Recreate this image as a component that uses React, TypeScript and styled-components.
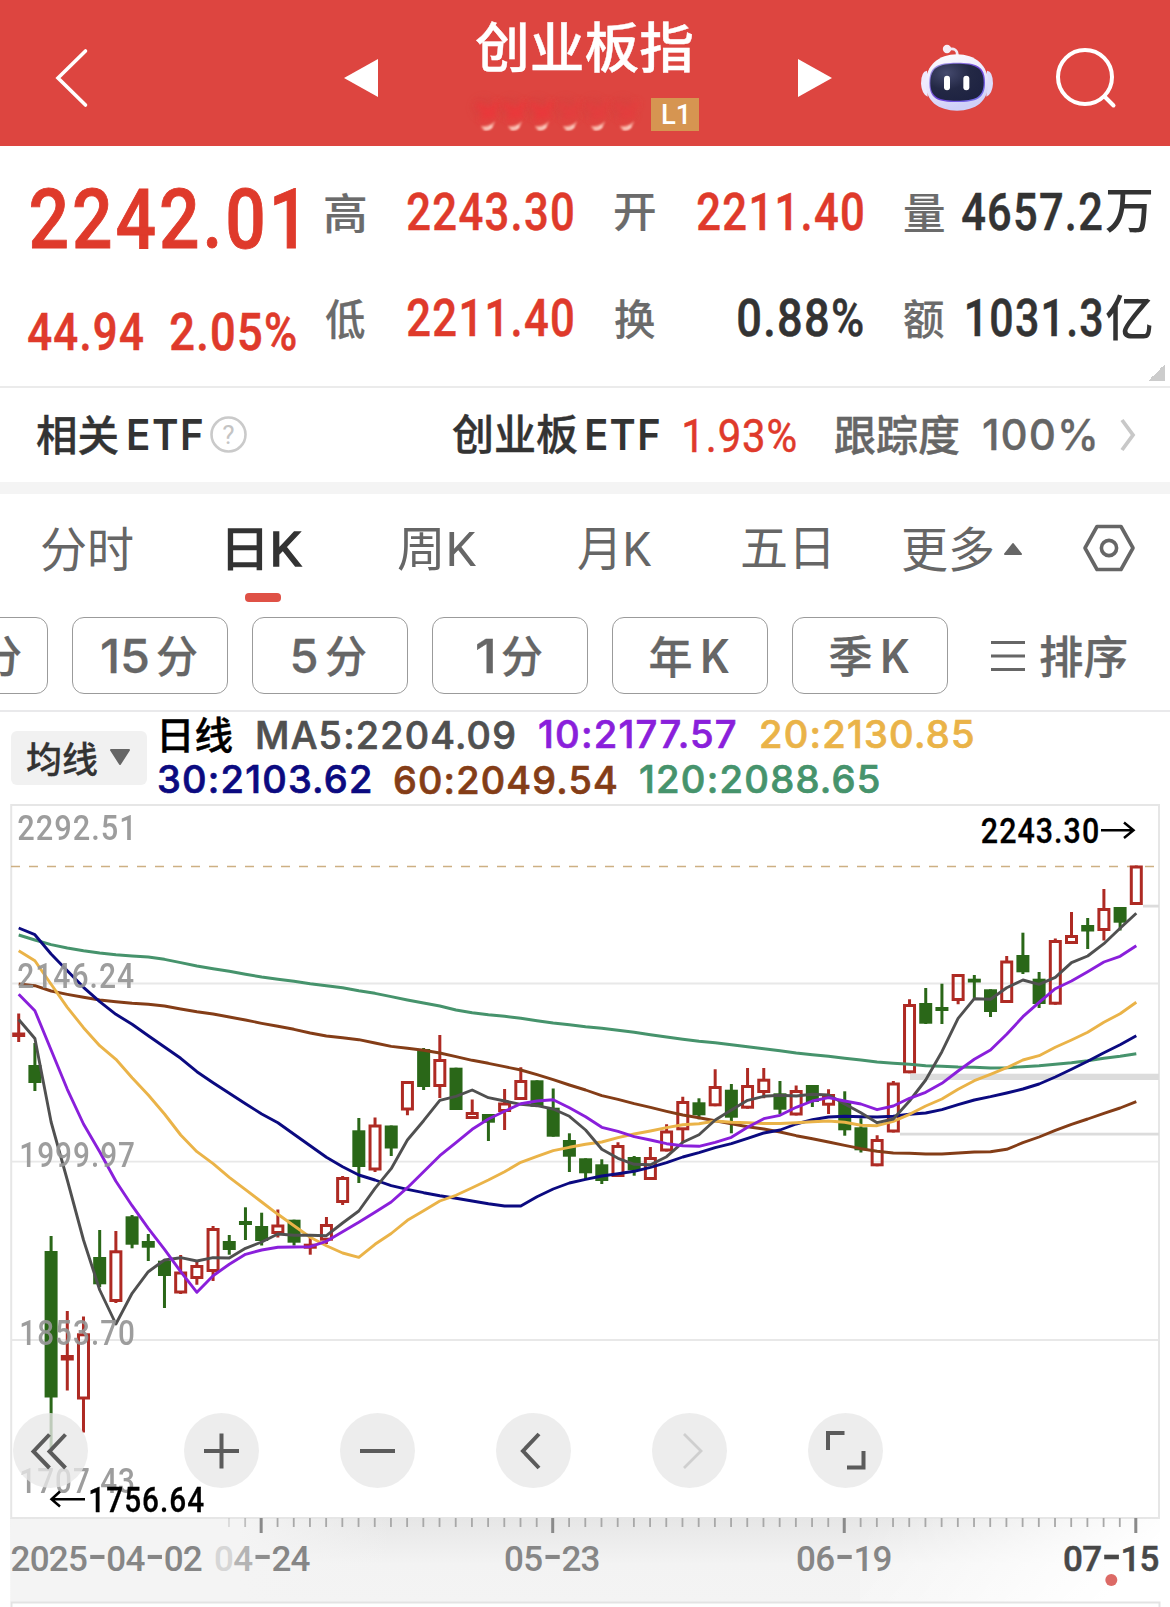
import React from "react";
import styled, { createGlobalStyle } from "styled-components";

const DIGITS = 'Roboto, "Noto Sans CJK SC", sans-serif';
const LATIN = 'Inter, "Noto Sans CJK SC", sans-serif';

const GlobalStyle = createGlobalStyle`
  *, *::before, *::after { box-sizing: border-box; }
  body { margin: 0; background: #fff; font-family: ${DIGITS}; }
  svg { display: block; flex: none; overflow: visible; }
`;

/* ---------- text stretched to an exact ink width ---------- */

const canvas = document.createElement("canvas").getContext("2d")!;

function measure(text: string, size: number, weight: number, face: string, spacing = 0) {
  canvas.font = `${weight} ${size}px ${face}`;
  canvas.letterSpacing = `${spacing}px`;
  const m = canvas.measureText(text);
  const left = -m.actualBoundingBoxLeft;
  const width = m.actualBoundingBoxRight + m.actualBoundingBoxLeft;
  const inkMid = (m.actualBoundingBoxAscent - m.actualBoundingBoxDescent) / 2;
  const boxMid = (m.fontBoundingBoxAscent - m.fontBoundingBoxDescent) / 2;
  return { left, width, drop: inkMid - boxMid };
}

const TextBox = styled.span<{ $w: number; $ml: number; $size: number; $weight: number; $face: string; $color: string; $edge: number; $spacing: number }>`
  display: block;
  flex: none;
  width: ${(p) => p.$w}px;
  margin-left: ${(p) => p.$ml}px;
  font: ${(p) => p.$weight} ${(p) => p.$size}px/${(p) => Math.round(p.$size * 1.2)}px ${(p) => p.$face};
  letter-spacing: ${(p) => p.$spacing}px;
  color: ${(p) => p.$color};
  -webkit-text-stroke: ${(p) => p.$edge}px ${(p) => p.$color};
  white-space: nowrap;
`;

const TextInk = styled.span`
  display: inline-block;
  vertical-align: top;
  transform-origin: 0 50%;
`;

type TextProps = {
  text: string;
  w: number;
  size: number;
  ml?: number;
  dy?: number;
  weight?: number;
  face?: string;
  color?: string;
  edge?: number;
  spacing?: number;
};

function Txt({ text, w, size, ml = 0, dy = 0, weight = 500, face = DIGITS, color = "#666", edge = 0, spacing = 0 }: TextProps) {
  const m = measure(text, size, weight, face, spacing);
  const s = w / m.width;
  return (
    <TextBox $w={w} $ml={ml} $size={size} $weight={weight} $face={face} $color={color} $edge={edge} $spacing={spacing}>
      <TextInk style={{ transform: `translate(${-m.left * s}px, ${m.drop + dy}px) scaleX(${s})` }}>{text}</TextInk>
    </TextBox>
  );
}

/* ---------- header ---------- */

const Header = styled.header`
  display: flex;
  align-items: center;
  height: 146px;
  padding: 10px 0 0 54px;
  background: #dd4540;
`;

const Slot = styled.div<{ $ml: number }>`
  margin-left: ${(p) => p.$ml}px;
  flex: none;
`;

const TitleBlock = styled.div`
  width: 229px;
  height: 136px;
  margin-left: 92px;
  padding-top: 4px;
  flex: none;
`;

const CodeRow = styled.div`
  display: flex;
  justify-content: space-between;
  align-items: flex-start;
  margin-top: 17px;
`;

const LevelBadge = styled.div`
  display: flex;
  align-items: center;
  width: 48px;
  height: 33px;
  margin-top: 2px;
  background: #d69551;
`;

const RED_SPOTS = [17, 44, 71, 99, 127, 156];

function CodeSmudge() {
  return (
    <svg width="176" height="38" viewBox="0 0 176 38">
      <defs>
        <filter id="soft" x="-50%" y="-50%" width="200%" height="200%">
          <feGaussianBlur stdDeviation="3.2" />
        </filter>
        <filter id="softer" x="-50%" y="-50%" width="200%" height="200%">
          <feGaussianBlur stdDeviation="0.8" />
        </filter>
      </defs>
      {RED_SPOTS.map((x, i) => (
        <g key={x}>
          <ellipse cx={x - 3} cy={12} rx={12} ry={11} fill="#d33f3c" opacity=".4" filter="url(#soft)" />
          <path
            d={`M${x - 10} 8L${x + 2} 17L${x + 12} 6M${x - 6} 25L${x + 1} 17L${x + 9} 22`}
            fill="none"
            stroke={i < 3 ? "#f53238" : "#ea3a3c"}
            strokeWidth="6"
            opacity=".65"
            filter="url(#soft)"
          />
          <path d={`M${x - 6} 30Q${x + 3} 31 ${x + 8} 25Q${x + 6} 34 ${x - 1} 34Q${x - 5} 34 ${x - 6} 30Z`} fill="#f6a497" filter="url(#softer)" />
          <path d={`M${x - 3} 33Q${x + 2} 34 ${x + 5} 30`} fill="none" stroke="#ffe6dc" strokeWidth="1.6" filter="url(#softer)" />
        </g>
      ))}
    </svg>
  );
}

function Robot() {
  return (
    <svg width="100" height="85" viewBox="0 0 300 255">
      <defs>
        <linearGradient id="shell" x1="0" y1="0" x2="0.3" y2="1">
          <stop offset="0" stopColor="#ffffff" />
          <stop offset=".6" stopColor="#e8e4fb" />
          <stop offset="1" stopColor="#cfd0f8" />
        </linearGradient>
        <linearGradient id="rim" x1="0" y1="0" x2="1" y2="1">
          <stop offset="0" stopColor="#a9a4e6" />
          <stop offset=".55" stopColor="#6a3fd8" />
          <stop offset="1" stopColor="#7b7df0" />
        </linearGradient>
        <radialGradient id="visor" cx=".3" cy=".25" r=".9">
          <stop offset="0" stopColor="#454a6e" />
          <stop offset=".5" stopColor="#232845" />
          <stop offset="1" stopColor="#1c2140" />
        </radialGradient>
      </defs>
      <path d="M128 41Q158 32 157 60" fill="none" stroke="#f2e9f5" strokeWidth="8" />
      <circle cx="126" cy="39" r="12.5" fill="#f6edf6" />
      <path d="M66 104Q48 106 48 143Q50 174 68 182Z" fill="#efeafc" />
      <path d="M246 104Q264 106 264 143Q262 174 244 182Z" fill="#dfdcfb" />
      <path d="M156 55C210 55 250 88 250 142C250 196 212 224 156 224C100 224 62 196 62 142C62 88 102 55 156 55Z" fill="url(#shell)" />
      <path d="M156 80C214 80 240 90 240 140C240 188 214 198 156 198C98 198 73 188 73 140C73 90 98 80 156 80Z" fill="url(#rim)" />
      <path d="M155 83C209 83 236 93 236 140C236 185 209 194 155 194C103 194 76 185 76 140C76 93 103 83 155 83Z" fill="url(#visor)" />
      <rect x="117" y="119" width="18" height="44" rx="9" fill="#fff" />
      <rect x="175" y="119" width="18" height="44" rx="9" fill="#fff" />
    </svg>
  );
}

function TopBar() {
  return (
    <Header>
      <svg width="36" height="62" viewBox="0 0 36 62" fill="none" stroke="#fff" strokeWidth="3.6">
        <path d="M31.5 4L4 31L31.5 58" strokeLinecap="round" />
      </svg>
      <Slot $ml={254}>
        <svg width="34" height="38" viewBox="0 0 34 38">
          <path d="M34 0V38L0 19Z" fill="#fff" />
        </svg>
      </Slot>
      <TitleBlock>
        <Txt text="创业板指" w={216} size={54} ml={6} color="#fff" weight={500} edge={0.4} />
        <CodeRow>
          <CodeSmudge />
          <LevelBadge>
            <Txt text="L1" w={25} size={27} ml={11} dy={-1} color="#fff" />
          </LevelBadge>
        </CodeRow>
      </TitleBlock>
      <Slot $ml={99}>
        <svg width="34" height="38" viewBox="0 0 34 38">
          <path d="M0 0V38L34 19Z" fill="#fff" />
        </svg>
      </Slot>
      <Slot $ml={73}>
        <Robot />
      </Slot>
      <Slot $ml={50}>
        <svg width="64" height="62" viewBox="0 0 64 62" fill="none" stroke="#fff" strokeWidth="4">
          <circle cx="30" cy="30" r="27" />
          <path d="M50 50L58.5 58.5" strokeLinecap="round" />
        </svg>
      </Slot>
    </Header>
  );
}

/* ---------- quote ---------- */

const RED = "#df3a2b";
const DARK = "#333";

const Quote = styled.section`
  display: flex;
  height: 242px;
  border-bottom: 2px solid #ebebeb;
`;

const Price = styled.div`
  width: 325px;
  flex: none;
`;

const PriceRow = styled.div<{ $h: number }>`
  display: flex;
  align-items: center;
  height: ${(p) => p.$h}px;
`;

const Stats = styled.div`
  display: grid;
  grid-template-columns: repeat(3, 248px);
  grid-template-rows: 106px 106px;
  column-gap: 41.5px;
  padding-top: 12px;
`;

const Stat = styled.div`
  display: flex;
  align-items: center;
  justify-content: space-between;
`;

const Value = styled.div`
  display: flex;
  align-items: center;
`;

const Corner = styled.i`
  align-self: flex-end;
  width: 17px;
  height: 17px;
  margin: 0 0 5px -4px;
  background: linear-gradient(135deg, transparent 50%, #ccc 50%);
`;

type StatItem = { label: string; value: string; w: number; unit?: string; color: string };

const STATS: StatItem[] = [
  { label: "高", value: "2243.30", w: 165, color: RED },
  { label: "开", value: "2211.40", w: 165, color: RED },
  { label: "量", value: "4657.2", w: 140, unit: "万", color: DARK },
  { label: "低", value: "2211.40", w: 165, color: RED },
  { label: "换", value: "0.88%", w: 125, color: DARK },
  { label: "额", value: "1031.3", w: 135, unit: "亿", color: DARK },
];

function QuotePanel() {
  return (
    <Quote>
      <Price>
        <PriceRow $h={143.5}>
          <Txt text="2242.01" w={265} size={84} ml={31} dy={0.7} color={RED} spacing={3.5} edge={0.9} />
        </PriceRow>
        <PriceRow $h={84.5}>
          <Txt text="44.94" w={115} size={51} ml={28} color={RED} spacing={1.5} edge={0.6} />
          <Txt text="2.05%" w={125} size={51} ml={28} color={RED} spacing={1.5} edge={0.6} />
        </PriceRow>
      </Price>
      <Stats>
        {STATS.map((s) => (
          <Stat key={s.label}>
            <Txt text={s.label} w={40} size={42.5} dy={1.5} color="#6b6b6b" edge={0.2} />
            <Value>
              <Txt text={s.value} w={s.w} size={51} color={s.color} spacing={1.5} edge={0.5} />
              {s.unit && <Txt text={s.unit} w={46} size={49} ml={4} color={s.color} />}
            </Value>
          </Stat>
        ))}
      </Stats>
      <Corner />
    </Quote>
  );
}

/* ---------- related ETF ---------- */

const EtfBar = styled.section`
  display: flex;
  align-items: center;
  height: 106px;
  padding-bottom: 1px;
  border-bottom: 12px solid #f4f4f4;
`;

function EtfRow() {
  return (
    <EtfBar>
      <Txt text="相关" w={81} size={42} ml={37} color={DARK} edge={0.4} />
      <Txt text="ETF" w={73} size={42} ml={11} face={LATIN} weight={600} color={DARK} spacing={1.5} />
      <Slot $ml={8}>
        <svg width="37" height="37" viewBox="0 0 37 37">
          <circle cx="18.5" cy="18.5" r="17" fill="none" stroke="#cacaca" strokeWidth="2.6" />
          <text x="18.5" y="27.5" textAnchor="middle" fontFamily="Roboto, sans-serif" fontSize="26" fill="#c4c4c4">?</text>
        </svg>
      </Slot>
      <Txt text="创业板" w={125} size={42} ml={205} color={DARK} edge={0.4} />
      <Txt text="ETF" w={72} size={42} ml={10} face={LATIN} weight={600} color={DARK} spacing={1.5} />
      <Txt text="1.93%" w={112} size={45.5} ml={25} dy={0.5} weight={400} color={RED} spacing={1} edge={0.5} />
      <Txt text="跟踪度" w={124} size={42} ml={39} edge={0.4} />
      <Txt text="100%" w={112} size={42} ml={24} dy={0.5} face={LATIN} spacing={1} edge={0.3} />
      <Slot $ml={25}>
        <svg width="15" height="32" viewBox="0 0 15 32" fill="none" stroke="#c8c8c8" strokeWidth="3.8">
          <path d="M2 1L13 16L2 31" />
        </svg>
      </Slot>
    </EtfBar>
  );
}

/* ---------- period tabs ---------- */

const Tabs = styled.nav`
  display: flex;
  height: 123px;
  padding-top: 26px;
`;

const Tab = styled.div<{ $ml: number }>`
  display: flex;
  flex-direction: column;
  align-items: flex-start;
  margin-left: ${(p) => p.$ml}px;
  flex: none;
`;

const ActiveMark = styled.i`
  width: 36px;
  height: 9px;
  margin: 15px 0 0 17px;
  border-radius: 4px;
  background: #df5146;
`;

const MoreTab = styled.div`
  display: flex;
  height: 58px;
  align-items: center;
  margin-left: 75px;
`;

function PeriodTabs() {
  return (
    <Tabs>
      <Tab $ml={42}>
        <Txt text="分时" w={91} size={48} weight={400} />
      </Tab>
      <Tab $ml={95}>
        <Txt text="日K" w={74} size={48} weight={400} color={DARK} edge={1.4} dy={1} />
        <ActiveMark />
      </Tab>
      <Tab $ml={96}>
        <Txt text="周K" w={79} size={48} weight={400} dy={1} />
      </Tab>
      <Tab $ml={101}>
        <Txt text="月K" w={74} size={48} weight={400} dy={1} />
      </Tab>
      <Tab $ml={90}>
        <Txt text="五日" w={86} size={48} weight={400} />
      </Tab>
      <MoreTab>
        <Txt text="更多" w={90} size={48} weight={400} />
        <Slot $ml={11}>
          <svg width="18" height="12" viewBox="0 0 18 12">
            <path d="M9 1L17 11H1Z" fill="#666" stroke="#666" strokeWidth="2" strokeLinejoin="round" />
          </svg>
        </Slot>
        <Slot $ml={61}>
          <svg width="52" height="46" viewBox="0 1 52 46" fill="none" stroke="#666" strokeWidth="3.6" strokeLinejoin="round">
            <path d="M14 1.5H38L50 23L38 44.5H14L2 23Z" />
            <circle cx="26" cy="23" r="7.6" />
          </svg>
        </Slot>
      </MoreTab>
    </Tabs>
  );
}

const Pills = styled.div`
  display: flex;
  align-items: center;
  gap: 24px;
  height: 95px;
  padding-bottom: 16px;
  border-bottom: 2px solid #e9e9eb;
`;

const Pill = styled.div<{ $cut?: boolean; $gap?: number }>`
  display: flex;
  align-items: center;
  justify-content: ${(p) => (p.$cut ? "flex-end" : "center")};
  gap: ${(p) => p.$gap ?? 0}px;
  flex: none;
  width: 156px;
  height: 77px;
  margin-left: ${(p) => (p.$cut ? -108 : 0)}px;
  padding-right: ${(p) => (p.$cut ? 26 : 2)}px;
  border: 1.5px solid #9b9b9b;
  border-radius: 12px;
`;

const Sort = styled.div`
  display: flex;
  align-items: center;
  margin-left: 19px;
`;

const PILLS = [
  { cjk: "分", latin: "15", w: 46, first: true },
  { cjk: "分", latin: "5", w: 24, first: true },
  { cjk: "分", latin: "1", w: 16, first: true },
  { cjk: "年", latin: "K", w: 26 },
  { cjk: "季", latin: "K", w: 26 },
];

function PillRow() {
  return (
    <Pills>
      <Pill $cut>
        <Txt text="分" w={41} size={44} dy={1} edge={0.3} />
      </Pill>
      {PILLS.map((p) => {
        const latin = <Txt key="l" text={p.latin} w={p.w} size={47} face={LATIN} weight={p.first ? 500 : 600} edge={p.first ? 0.3 : 0} />;
        const cjk = <Txt key="c" text={p.cjk} w={p.first ? 40 : 42} size={44} dy={1} edge={0.3} />;
        return (
          <Pill key={p.cjk + p.latin} $gap={p.first ? 9 : 11}>
            {p.first ? [latin, cjk] : [cjk, latin]}
          </Pill>
        );
      })}
      <Sort>
        <svg width="34" height="30" viewBox="0 0 34 30" stroke="#666" strokeWidth="2.8">
          <path d="M0 1.5H34M0 15H34M0 28.5H34" />
        </svg>
        <Txt text="排序" w={86} size={45} ml={15} dy={0.5} edge={0.3} />
      </Sort>
    </Pills>
  );
}

/* ---------- moving-average legend ---------- */

const Legend = styled.section`
  display: flex;
  height: 91px;
`;

const AverageButton = styled.div`
  display: flex;
  align-items: center;
  width: 136px;
  height: 54px;
  margin: 19px 0 0 11px;
  border-radius: 6px;
  background: #f1f1f1;
`;

const LegendRows = styled.div`
  padding: 0 0 0 12px;
`;

const LegendRow = styled.div<{ $h: number }>`
  display: flex;
  align-items: center;
  height: ${(p) => p.$h}px;
`;

const C = {
  ma5: "#505050",
  ma10: "#8a1fdb",
  ma20: "#eab348",
  ma30: "#0b0a80",
  ma60: "#843d17",
  ma120: "#46936c",
};

function Average({ text, w, ml = 0, color }: { text: string; w: number; ml?: number; color: string }) {
  return <Txt text={text} w={w} size={38} ml={ml} face={LATIN} color={color} spacing={1.2} edge={0.7} />;
}

function LegendBar() {
  return (
    <Legend>
      <AverageButton>
        <Txt text="均线" w={70} size={36} ml={16} dy={1} weight={500} color="#333" edge={0.3} />
        <Slot $ml={13}>
          <svg width="20" height="16" viewBox="0 1 20 16">
            <path d="M1 1H19L10 15Z" fill="#666" stroke="#666" strokeWidth="2" strokeLinejoin="round" />
          </svg>
        </Slot>
      </AverageButton>
      <LegendRows>
        <LegendRow $h={43}>
          <Txt text="日线" w={70} size={38} ml={3} color="#000" edge={0.4} />
          <Average text="MA5:2204.09" w={256} ml={26} color={C.ma5} />
          <Average text="10:2177.57" w={197} ml={25} color={C.ma10} />
          <Average text="20:2130.85" w={212} ml={25} color={C.ma20} />
        </LegendRow>
        <LegendRow $h={47}>
          <Average text="30:2103.62" w={211} color={C.ma30} />
          <Average text="60:2049.54" w={221} ml={25} color={C.ma60} />
          <Average text="120:2088.65" w={239} ml={24} color={C.ma120} />
        </LegendRow>
      </LegendRows>
    </Legend>
  );
}

/* ---------- candlestick chart ---------- */

const ChartArea = styled.section`
  position: relative;
  height: 804px;
  overflow: hidden;
`;

const STEP = 16.197;
const cx = (i: number) => 18.7 + i * STEP;

/* colour, high, body top, body bottom, low */
type Candle = ["r" | "g", number, number, number, number];

const CANDLES: Candle[] = [
  ["r", 1013.5, 1032.5, 1037, 1042], ["g", 1043, 1065, 1083, 1091], ["g", 1236, 1251, 1397.5, 1448],
  ["r", 1311, 1355, 1360.5, 1390.5], ["r", 1316.5, 1333.3, 1399.5, 1432.5], ["g", 1230, 1257, 1284.3, 1287],
  ["r", 1231, 1250.3, 1302, 1303], ["g", 1215, 1216.3, 1244.7, 1248.3], ["g", 1234, 1241, 1247.7, 1261],
  ["g", 1260, 1260.7, 1276, 1308], ["r", 1255, 1271.5, 1293.5, 1294], ["r", 1261.7, 1265, 1279, 1284.7],
  ["r", 1226, 1228, 1272, 1281], ["g", 1235, 1241, 1250, 1254.7], ["g", 1207.3, 1221, 1225, 1240],
  ["g", 1212.7, 1226, 1241, 1245.5], ["r", 1209.5, 1224.5, 1234, 1237.5], ["g", 1219.7, 1219.7, 1242.7, 1245.5],
  ["r", 1237.5, 1243.7, 1248.7, 1254.7], ["r", 1217, 1224, 1240.7, 1244], ["r", 1176, 1177, 1203, 1205],
  ["g", 1118, 1130.3, 1167, 1183], ["r", 1117.5, 1124.5, 1170.5, 1172], ["g", 1125.5, 1125.5, 1148.5, 1156],
  ["r", 1081, 1081, 1110.5, 1115.3], ["g", 1048, 1049, 1087, 1090], ["r", 1035, 1059, 1087, 1098],
  ["g", 1067.7, 1067.7, 1110, 1110], ["r", 1099.5, 1112, 1119, 1119], ["g", 1114, 1114, 1122.7, 1141],
  ["r", 1089, 1102.5, 1112, 1130], ["r", 1067.3, 1080, 1100, 1100], ["g", 1080.3, 1080.3, 1106.7, 1107],
  ["g", 1088.5, 1107.7, 1136.7, 1136.7], ["g", 1133.3, 1140, 1156.7, 1172], ["g", 1158.3, 1158.3, 1173.3, 1180],
  ["g", 1159.3, 1164.3, 1181, 1184], ["r", 1142.3, 1145, 1177, 1177], ["g", 1156, 1157, 1170.3, 1175.7],
  ["r", 1147, 1157, 1180, 1180], ["r", 1124.3, 1130.5, 1151.5, 1151.5], ["r", 1096.7, 1101, 1130.3, 1142.7],
  ["g", 1098.3, 1102.3, 1115.3, 1119.3], ["r", 1069.3, 1086, 1106.3, 1106.3], ["g", 1084, 1089.7, 1117.7, 1133.3],
  ["r", 1068, 1085, 1108.7, 1108.7], ["r", 1068, 1078.7, 1093, 1098.3], ["g", 1081, 1093.3, 1109.7, 1114],
  ["r", 1085.5, 1090, 1115.5, 1115.5], ["g", 1085, 1085, 1102, 1107], ["r", 1089.3, 1094, 1105.7, 1114],
  ["g", 1091.3, 1101.7, 1130.3, 1135.7], ["g", 1118.3, 1127.3, 1150.3, 1152.5], ["r", 1135.3, 1139, 1166.3, 1166.3],
  ["r", 1081, 1082.5, 1132.5, 1132.5], ["r", 999.3, 1004, 1073.3, 1073.3], ["g", 988, 1003, 1023.7, 1024],
  ["g", 983.7, 1007, 1011, 1024], ["r", 974, 974, 1001, 1004.3], ["g", 975, 978.7, 982.5, 998.7],
  ["g", 989.3, 989.3, 1012, 1017], ["r", 956, 960.5, 1003, 1003], ["g", 932.7, 955, 972.3, 974],
  ["g", 972, 978.7, 1004, 1008], ["r", 938.5, 940, 1004.7, 1004.7], ["r", 912, 935, 944, 944],
  ["g", 918, 925, 931.5, 949], ["r", 889, 908, 931, 940.5], ["g", 907, 907, 922.7, 930.5],
  ["r", 865.5, 865.5, 905, 905],
];

const MA: Record<keyof typeof C, number[]> = {
  ma120: [935, 940, 944.7, 948, 950.7, 953, 954.7, 956, 957, 959.3, 962.7, 966, 968.7, 971.3, 974.3, 977, 979.3, 981.3, 983.7, 985.7, 987.7, 990.7, 993.3, 996.7, 1000, 1003, 1006, 1010, 1012.7, 1014.7, 1016.3, 1018.3, 1020.7, 1023, 1024.7, 1026.7, 1028.3, 1030.3, 1032.3, 1034.7, 1037, 1039.3, 1041.3, 1042.7, 1044.7, 1046.7, 1048.7, 1050.7, 1053, 1054.7, 1056.3, 1058.3, 1060, 1062, 1063.3, 1064.3, 1065.7, 1066.3, 1067, 1067.3, 1068, 1067.7, 1066.7, 1065.7, 1064.3, 1062.7, 1060.7, 1058.3, 1056.3, 1053.7],
  ma60: [984, 985.7, 991, 994.3, 997.3, 1000, 1001.7, 1003.3, 1004.3, 1006, 1009, 1011.7, 1014, 1017, 1020, 1023.3, 1026.3, 1029.3, 1033, 1036, 1037.7, 1039.7, 1043, 1046.4, 1048.3, 1050.3, 1053, 1056.7, 1060.3, 1063.3, 1066.7, 1070, 1074.7, 1079.7, 1085, 1090, 1095.7, 1099.3, 1103.7, 1107.3, 1111.3, 1115, 1117.7, 1120.7, 1123.7, 1126.7, 1129, 1132, 1135.7, 1138.7, 1142, 1145.3, 1148.7, 1151.3, 1153, 1153.3, 1154, 1154, 1153, 1152, 1151.7, 1149.3, 1142.7, 1137, 1130.3, 1124.3, 1119, 1113.3, 1108, 1101.7],
  ma30: [928, 934.7, 954, 970.7, 987.3, 1001.7, 1014.3, 1024.3, 1035.7, 1047, 1058.3, 1071.7, 1082.7, 1093.3, 1103.7, 1114, 1122.7, 1134.2, 1145.7, 1157.3, 1166.7, 1175, 1180, 1185.7, 1189.3, 1192.7, 1195.7, 1198.3, 1201, 1203.7, 1206, 1206, 1196.7, 1189, 1183, 1179.3, 1176, 1173.7, 1171.3, 1167.3, 1162.7, 1157, 1152.7, 1147.7, 1143.7, 1138.3, 1133, 1130, 1124, 1119.7, 1117, 1116.3, 1116.7, 1117, 1116.3, 1114.3, 1113, 1109.7, 1104.7, 1100, 1096.7, 1093, 1089, 1084, 1077, 1069.3, 1061.3, 1052.7, 1044.7, 1035.7],
  ma20: [950.7, 960.7, 984.3, 1007.3, 1027.7, 1045.7, 1059.3, 1077.7, 1095, 1114, 1135, 1151.7, 1163.7, 1177.3, 1189.7, 1202, 1214.3, 1225.7, 1237.3, 1245.7, 1253, 1257.3, 1244.3, 1233.5, 1220.3, 1210.7, 1201, 1195.3, 1187.7, 1180, 1171.7, 1162.3, 1156.3, 1150.7, 1147.3, 1144.3, 1142, 1137.7, 1134, 1131, 1127.7, 1124.7, 1123.7, 1121, 1122.3, 1122.7, 1123.5, 1123.5, 1122.7, 1121.7, 1121, 1122.3, 1125.3, 1125.7, 1121.3, 1114.3, 1106, 1099, 1089.3, 1080.7, 1074.3, 1067.7, 1060, 1055.7, 1047.3, 1040, 1032.3, 1022.3, 1013.7, 1002.3],
  ma5: [1019.5, 1038.5, 1122, 1180, 1240, 1290, 1324, 1293.3, 1271.7, 1260, 1257.7, 1261, 1257.7, 1258, 1248.3, 1242, 1234, 1235.3, 1235.3, 1235.7, 1223, 1211, 1188.3, 1168.7, 1140, 1120.7, 1100.3, 1096.3, 1090, 1097.7, 1101, 1104.3, 1105.7, 1109, 1116.3, 1130, 1149.3, 1158.3, 1164.3, 1164.7, 1156.7, 1142.3, 1134.7, 1120, 1110, 1100.3, 1096.3, 1095.3, 1096, 1094.3, 1095, 1104, 1112.7, 1122.7, 1119, 1101, 1080, 1051.7, 1018.3, 998.7, 999.3, 987.7, 980, 984.3, 977.3, 962.7, 956, 943.7, 928.3, 913.3],
  ma10: [994.3, 1010.7, 1050, 1089.3, 1124, 1151.7, 1181.3, 1205.7, 1228.3, 1249.3, 1271.7, 1292.3, 1275.7, 1264.3, 1254.3, 1250, 1247.3, 1247, 1246.7, 1241.3, 1231.7, 1222.3, 1212.3, 1202, 1187.7, 1171.7, 1155.7, 1142.7, 1129.3, 1119, 1111.3, 1103.7, 1101, 1099.7, 1107.7, 1116.7, 1127.3, 1131.3, 1136.7, 1140, 1143.7, 1145.7, 1146.3, 1142.3, 1137.3, 1127.3, 1118.7, 1115.3, 1107.3, 1101, 1097.7, 1101, 1104, 1109.7, 1106, 1098.3, 1092.3, 1083.3, 1071, 1059.3, 1050, 1034.3, 1016.7, 1002.3, 988.7, 981, 971.7, 962, 956.3, 945.7],
};

function ChartText({ text, x, y, w, size = 35.5, color = "#969696", edge = 0 }: { text: string; x: number; y: number; w: number; size?: number; color?: string; edge?: number }) {
  const spacing = 1.2;
  const m = measure(text, size, 500, DIGITS, spacing);
  const s = w / m.width;
  return (
    <text
      transform={`translate(${x - m.left * s} ${y}) scale(${s} 1)`}
      fontFamily={DIGITS}
      fontSize={size}
      fontWeight={500}
      letterSpacing={spacing}
      fill={color}
      stroke={color}
      strokeWidth={edge}
    >
      {text}
    </text>
  );
}

function DateText({ text, x, color = "#868686", fade = [], edge = 0 }: { text: string; x: number; color?: string; fade?: string[]; edge?: number }) {
  return (
    <text y="1570.7" fontFamily={DIGITS} fontSize="35" fontWeight={500} fill={color} stroke={fade.length ? "none" : color} strokeWidth={edge}>
      {text.split("").map((ch, i) => {
        const dash = ch === "-";
        return (
          <tspan
            key={i}
            x={x + i * 19.15 - (dash ? 6.3 : 1)}
            fill={fade[i]}
            fontSize={dash ? 52 : undefined}
            fontFamily={dash ? '"Liberation Mono", monospace' : undefined}
            fontWeight={dash ? 400 : undefined}
          >
            {ch}
          </tspan>
        );
      })}
    </text>
  );
}

function CandleMark({ i, c }: { i: number; c: Candle }) {
  const [tone, high, top, bottom, low] = c;
  const x = cx(i);
  if (tone === "g" || bottom - top < 6) {
    return (
      <g fill={tone === "g" ? "#2a6718" : "#ae2a23"}>
        <rect x={x - 1.5} y={high} width="3" height={low - high} />
        <rect x={x - 6.5} y={top} width="13" height={bottom - top} />
      </g>
    );
  }
  return (
    <g stroke="#ae2a23" strokeWidth="3" fill="none">
      <path d={`M${x} ${high}V${top + 1}M${x} ${bottom - 1}V${low}`} />
      <rect x={x - 5} y={top + 1.5} width="10" height={bottom - top - 3} />
    </g>
  );
}

function Chart() {
  const ticks = Array.from({ length: 57 }, (_, k) => k + 13);
  return (
    <svg width="1170" height="804" viewBox="0 803 1170 804">
      <defs>
        <linearGradient id="axisShade" x1="0" y1="0" x2="0" y2="1">
          <stop offset="0" stopColor="#e6e6e6" />
          <stop offset=".55" stopColor="#f3f3f3" />
          <stop offset="1" stopColor="#f4f4f4" />
        </linearGradient>
        <linearGradient id="axisLeft" x1="0" y1="0" x2="1" y2="0">
          <stop offset="0" stopColor="#f4f4f4" />
          <stop offset=".6" stopColor="#f4f4f4" />
          <stop offset="1" stopColor="#f4f4f4" stopOpacity="0" />
        </linearGradient>
        <linearGradient id="axisRight" x1="0" y1="0" x2="1" y2="0.25">
          <stop offset="0" stopColor="#fff" stopOpacity="0" />
          <stop offset="1" stopColor="#fff" stopOpacity="1" />
        </linearGradient>
      </defs>

      <rect x="11.2" y="805" width="1147.8" height="713" fill="none" stroke="#e6e6e6" strokeWidth="2" />
      <path d="M12 983.5H1158M12 1161.7H1158M12 1340H1158" stroke="#e8e8e8" strokeWidth="1.8" />
      <rect x="10.5" y="1518" width="1149.5" height="84" fill="url(#axisShade)" />
      <rect x="10.5" y="1519" width="380" height="83" fill="url(#axisLeft)" />
      <rect x="860" y="1519" width="300" height="83" fill="url(#axisRight)" />
      <path d="M11.5 1607V1602.5H1159.5V1607" fill="none" stroke="#e3e3e3" strokeWidth="2" />

      <rect x="910" y="1073.7" width="249" height="6.3" fill="#dcdcdc" />
      <rect x="900" y="1132.7" width="259" height="2.8" fill="#dcdcdc" />
      <rect x="1143" y="904.7" width="16" height="2.8" fill="#dcdcdc" />
      <path d="M11 866.5H1156" stroke="#cdb083" strokeWidth="1.6" strokeDasharray="9 9" />

      {CANDLES.map((c, i) => (
        <CandleMark key={i} i={i} c={c} />
      ))}
      {(Object.keys(MA) as (keyof typeof C)[]).map((k) => (
        <polyline
          key={k}
          points={MA[k].map((y, i) => `${cx(i).toFixed(1)},${y}`).join(" ")}
          fill="none"
          stroke={C[k]}
          strokeWidth="2.9"
          strokeLinejoin="round"
        />
      ))}

      <g opacity=".93">
        <ChartText text="2292.51" x={18} y={840.3} w={113.5} />
        <ChartText text="2146.24" x={18} y={988.2} w={116} />
        <ChartText text="1999.97" x={21} y={1166.5} w={113} />
        <ChartText text="1853.70" x={21} y={1344.8} w={113} />
        <ChartText text="1707.43" x={21} y={1493.2} w={113} />
      </g>
      <ChartText text="2243.30" x={981.7} y={842.7} w={116.5} color="#000" edge={0.3} />
      <path d="M1101 830.3H1133M1124 822.5L1133.5 830.3L1124 838" fill="none" stroke="#000" strokeWidth="2.5" />

      {ticks.map((i) => {
        const major = (i - 15) % 18 === 0;
        return (
          <rect
            key={i}
            x={cx(i) - (major ? 2 : 1.2)}
            y={1518}
            width={major ? 3 : 1.8}
            height={major ? 15 : 9}
            fill={major ? "#8a8a8a" : "#a8a8a8"}
            opacity={i < 15 ? (i - 12) * 0.35 : 1}
          />
        );
      })}
      <DateText text="2025-04-02" x={11.5} />
      <DateText text="04-24" x={215} fade={["#d6d6d6", "#b4b4b4", "#8e8e8e"]} />
      <DateText text="05-23" x={505} />
      <DateText text="06-19" x={797} />
      <DateText text="07-15" x={1064} color="#484848" edge={0.5} />
      <circle cx="1111.3" cy="1580" r="6" fill="#dc6a66" />
    </svg>
  );
}

const Controls = styled.div`
  position: absolute;
  left: 13px;
  top: 610px;
  display: flex;
`;

const RoundButton = styled.div<{ $gap: number }>`
  width: 75px;
  height: 75px;
  margin-right: ${(p) => p.$gap}px;
  border-radius: 50%;
  background: rgba(232, 232, 232, 0.78);
`;

const LowLabel = styled.div`
  position: absolute;
  left: 0;
  top: 680px;
`;

const GLYPHS = [
  { d: "M36.5 21.5L20.5 38.5L36.5 55M52.5 21.5L36.5 38.5L52.5 55", gap: 96 },
  { d: "M20 38H55M37.5 20.5V55.5", gap: 81 },
  { d: "M20 38H55", gap: 81 },
  { d: "M43 21L27 38L43 55", gap: 81 },
  { d: "M32 21L49 38L32 55", gap: 81, dim: true },
  { d: "M20 37V20H36.5M55.5 38V54.5H39", gap: 0 },
];

function ChartControls() {
  return (
    <Controls>
      {GLYPHS.map((g, i) => (
        <RoundButton key={i} $gap={g.gap}>
          <svg width="75" height="75" viewBox="0 0 75 75">
            <path d={g.d} fill="none" stroke={g.dim ? "#cfcfcf" : "#5b5b5b"} strokeWidth={g.dim ? 2.8 : 4} />
          </svg>
        </RoundButton>
      ))}
    </Controls>
  );
}

const Page = styled.main`
  width: 1170px;
  height: 1607px;
  overflow: hidden;
  background: #fff;
`;

export default function App() {
  return (
    <Page>
      <GlobalStyle />
      <TopBar />
      <QuotePanel />
      <EtfRow />
      <PeriodTabs />
      <PillRow />
      <LegendBar />
      <ChartArea>
        <Chart />
        <ChartControls />
        <LowLabel>
          <svg width="210" height="40" viewBox="0 1483 210 40">
            <path d="M85 1499.3H52M60 1491.5L51.5 1499.3L60 1506.5" fill="none" stroke="#000" strokeWidth="2.5" />
            <ChartText text="1756.64" x={90} y={1512.3} w={114} color="#000" edge={0.3} />
          </svg>
        </LowLabel>
      </ChartArea>
    </Page>
  );
}
